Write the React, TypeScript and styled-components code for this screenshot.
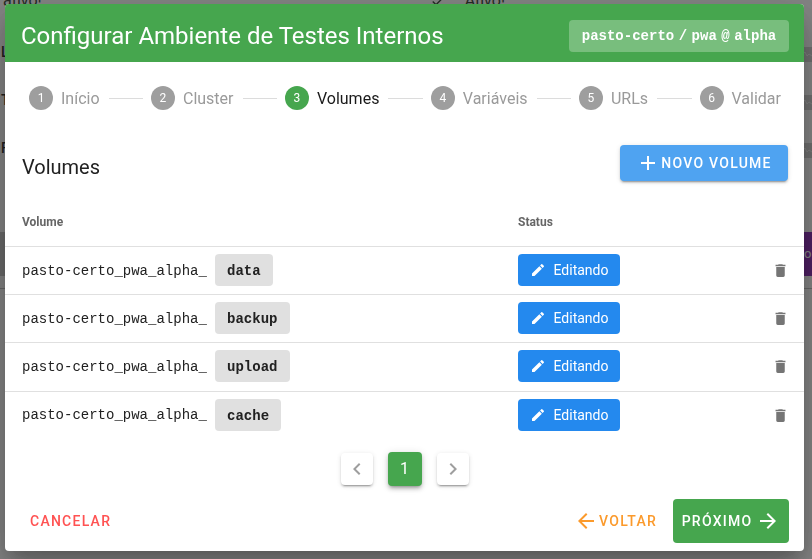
import { Fragment } from "react";
import styled, { createGlobalStyle } from "styled-components";

const GlobalStyle = createGlobalStyle`
  html, body {
    margin: 0;
    padding: 0;
    height: 100%;
    overflow: hidden;
    background: #fff;
    font-family: Roboto, "Liberation Sans", sans-serif;
  }
  * { box-sizing: border-box; }
`;

const mono = `"Liberation Mono", "Courier New", monospace`;
const green = "#46a64e";

// page behind the dialog
const Page = styled.div`
  width: 812px;
  height: 559px;
  overflow: hidden;
  color: #222;
  font-size: 16px;
`;

const TopLine = styled.div`
  height: 10px;
  display: flex;
  justify-content: space-between;
  padding: 0 307px 0 3px;
  line-height: 10px;
  margin-top: -4px;
  margin-bottom: 22px;
  color: #2a3a2a;
`;

const TopStatus = styled.span`
  display: flex;
  align-items: center;
  gap: 19px;
`;

const BackRow = styled.div`
  height: 48px;
  display: flex;
  justify-content: space-between;
  align-items: center;
  padding-left: 1px;
  font-weight: 500;
  font-size: 14px;
`;

const Spark = styled.svg`
  width: 10px;
  height: 15px;
  background: #d0d0d0;
  margin-top: 5px;
  fill: none;
  stroke: #f2f2f2;
  stroke-width: 1;
`;

const PurpleRow = styled.div`
  height: 44px;
  margin-top: 60px;
  display: flex;
  justify-content: space-between;
  background: #c6c6c6;
`;

const PurpleEnd = styled.div`
  width: 8px;
  background: #8721b4;
  color: #fff;
  font-size: 13px;
  line-height: 44px;
`;

const BackDivider = styled.div`
  height: 1px;
  margin-top: 12px;
  background: #c0c0c0;
`;

const Scrim = styled.div`
  position: fixed;
  inset: 0;
  background: rgba(33, 33, 33, 0.55);
`;

const Modal = styled.div`
  position: fixed;
  left: 5px;
  top: 4px;
  width: 799px;
  height: 547px;
  background: #fff;
  border-radius: 4px;
  overflow: hidden;
  box-shadow: 0 11px 15px -7px rgba(0, 0, 0, 0.2), 0 24px 38px 3px rgba(0, 0, 0, 0.14),
    0 9px 46px 8px rgba(0, 0, 0, 0.12);
  display: flex;
  flex-direction: column;
`;

const Header = styled.header`
  height: 58px;
  flex: none;
  background: ${green};
  color: #fff;
  display: flex;
  align-items: center;
  justify-content: space-between;
  padding: 6px 15px 0 16px;
`;

const Title = styled.h1`
  margin: 0;
  font-size: 24px;
  font-weight: 400;
  line-height: 32px;
`;

const Slug = styled.div`
  height: 32px;
  width: 220px;
  display: flex;
  align-items: center;
  justify-content: center;
  border-radius: 4px;
  background: rgba(255, 255, 255, 0.27);
  font-family: ${mono};
  font-weight: 700;
  font-size: 14px;
`;

const SlugSep = styled.span`
  margin: 0 4.5px;
`;

const Stepper = styled.nav`
  height: 72px;
  flex: none;
  display: flex;
  align-items: center;
  padding: 0 23px 0 24px;
`;

const Step = styled.div`
  display: flex;
  align-items: center;
  gap: 8px;
`;

const StepDot = styled.span<{ $active?: boolean }>`
  width: 24px;
  height: 24px;
  border-radius: 50%;
  background: ${(p) => (p.$active ? green : "#9e9e9e")};
  color: #fff;
  font-size: 12px;
  display: flex;
  align-items: center;
  justify-content: center;
`;

const StepLabel = styled.span<{ $active?: boolean }>`
  font-size: 16px;
  color: ${(p) => (p.$active ? "#1a1a1a" : "#9a9a9a")};
`;

const StepLine = styled.span`
  flex: 1;
  height: 1px;
  margin: 0 8px 0 9px;
  background: #dcdcdc;
`;

const SectionHead = styled.div`
  height: 36px;
  margin-top: 11px;
  flex: none;
  display: flex;
  align-items: center;
  justify-content: space-between;
  padding: 0 16px 0 17px;
`;

const SectionTitle = styled.h2`
  margin: 0;
  padding-top: 8px;
  font-size: 20px;
  font-weight: 400;
  color: #212121;
`;

const BaseButton = styled.button`
  border: 0;
  border-radius: 4px;
  font-family: Roboto, sans-serif;
  font-size: 14px;
  font-weight: 500;
  letter-spacing: 1.25px;
  text-transform: uppercase;
  display: flex;
  align-items: center;
  padding: 0;
  cursor: pointer;
`;

const NewButton = styled(BaseButton)`
  width: 168px;
  height: 36px;
  justify-content: center;
  gap: 1px;
  background: #4fa3f1;
  color: #fff;
  box-shadow: 0 3px 1px -2px rgba(0, 0, 0, 0.2), 0 2px 2px 0 rgba(0, 0, 0, 0.14),
    0 1px 5px 0 rgba(0, 0, 0, 0.12);
`;

const Table = styled.div`
  margin-top: 17px;
  flex: none;
`;

const Cols = styled.div`
  display: grid;
  grid-template-columns: 496px 1fr auto;
  align-items: center;
  padding: 0 18px 0 17px;
`;

const HeadRow = styled(Cols)`
  height: 48px;
  font-size: 12px;
  font-weight: 700;
  color: #666;
`;

const Row = styled(Cols)`
  height: 48.2px;
  border-top: 1px solid #e0e0e0;
  padding-bottom: 1.2px;
`;

const VolumeName = styled.div`
  display: flex;
  align-items: center;
  gap: 8px;
  font-family: ${mono};
  font-size: 14px;
  color: #212121;
`;

const Prefix = styled.span`
  padding-top: 1px;
`;

const Suffix = styled.span`
  height: 32px;
  display: flex;
  align-items: center;
  padding: 2px 12.2px 0;
  border-radius: 4px;
  background: #e0e0e0;
  font-weight: 700;
`;

const EditButton = styled(BaseButton)`
  width: 102px;
  height: 32px;
  justify-content: center;
  gap: 8px;
  background: #2489ee;
  color: #fff;
  font-weight: 400;
  letter-spacing: 0;
  text-transform: none;
`;

const Trash = styled.svg`
  width: 17px;
  height: 17px;
  margin: 1px -2.5px 0;
  fill: #757575;
  display: block;
`;

const Pager = styled.div`
  margin-top: 12px;
  height: 36px;
  flex: none;
  display: flex;
  justify-content: center;
  align-items: center;
  gap: 15px;
`;

const PageNav = styled.button`
  width: 32px;
  height: 32px;
  border: 0;
  padding: 0;
  border-radius: 4px;
  background: #fff;
  display: flex;
  align-items: center;
  justify-content: center;
  color: #9e9e9e;
  box-shadow: 0 3px 1px -2px rgba(0, 0, 0, 0.2), 0 2px 2px 0 rgba(0, 0, 0, 0.14),
    0 1px 5px 0 rgba(0, 0, 0, 0.12);
`;

const PageNumber = styled.button`
  width: 34px;
  height: 34px;
  border: 0;
  padding: 0;
  border-radius: 4px;
  background: ${green};
  color: #fff;
  font-family: Roboto, sans-serif;
  font-size: 16px;
  box-shadow: 0 3px 3px -2px rgba(0, 0, 0, 0.25), 0 3px 4px 0 rgba(0, 0, 0, 0.18),
    0 1px 8px 0 rgba(0, 0, 0, 0.12);
`;

const Footer = styled.footer`
  margin-top: 12px;
  height: 44px;
  flex: none;
  display: flex;
  align-items: center;
  justify-content: space-between;
  padding: 0 15px 0 25px;
`;

const FooterRight = styled.div`
  display: flex;
  align-items: center;
  gap: 16px;
`;

const TextButton = styled(BaseButton)<{ $color: string }>`
  background: transparent;
  color: ${(p) => p.$color};
  gap: 1px;
`;

const NextButton = styled(BaseButton)`
  width: 116px;
  height: 44px;
  justify-content: center;
  gap: 4px;
  background: ${green};
  color: #fff;
`;

const Icon = ({ d, size }: { d: string; size: number }) => (
  <svg width={size} height={size} viewBox="0 0 24 24" fill="currentColor">
    <path d={d} />
  </svg>
);

const Wave = () => (
  <Spark viewBox="0 0 10 15">
    <path d="M0 8 L3 5 L5 9 L7 7 L10 9" />
  </Spark>
);

const PLUS = "M19 13h-6v6h-2v-6H5v-2h6V5h2v6h6v2z";
const PENCIL =
  "M3 17.25V21h3.75L17.81 9.94l-3.75-3.75L3 17.25zM20.71 7.04a1 1 0 0 0 0-1.41l-2.34-2.34a1 1 0 0 0-1.41 0l-1.83 1.83 3.75 3.75 1.83-1.83z";
const DELETE = "M19 4h-3.5l-1-1h-5l-1 1H5v2h14V4zM6 19a2 2 0 0 0 2 2h8a2 2 0 0 0 2-2V7H6v12z";
const LEFT = "M15.41 7.41 14 6l-6 6 6 6 1.41-1.41L10.83 12z";
const RIGHT = "M8.59 16.59 10 18l6-6-6-6-1.41 1.41L13.17 12z";
const ARROW_LEFT = "M20 11H7.83l5.59-5.59L12 4l-8 8 8 8 1.41-1.41L7.83 13H20v-2z";
const ARROW_RIGHT = "M12 4l-1.41 1.41L16.17 11H4v2h12.17l-5.58 5.59L12 20l8-8z";
const CHECK = "M9 16.17 4.83 12l-1.42 1.41L9 19 21 7l-1.41-1.41z";

const steps = ["Início", "Cluster", "Volumes", "Variáveis", "URLs", "Validar"];
const volumes = ["data", "backup", "upload", "cache"];

export default function App() {
  return (
    <>
      <GlobalStyle />
      <Page>
        <TopLine>
          <span>ativo!</span>
          <TopStatus>
            <Icon d={CHECK} size={16} />
            Ativo!
          </TopStatus>
        </TopLine>
        <BackRow>
          L<Wave />
        </BackRow>
        <BackRow>
          T<Wave />
        </BackRow>
        <BackRow>
          F<Wave />
        </BackRow>
        <PurpleRow>
          <span />
          <PurpleEnd>o</PurpleEnd>
        </PurpleRow>
        <BackDivider />
      </Page>
      <Scrim />
      <Modal>
        <Header>
          <Title>Configurar Ambiente de Testes Internos</Title>
          <Slug>
            pasto-certo<SlugSep>/</SlugSep>pwa<SlugSep>@</SlugSep>alpha
          </Slug>
        </Header>
        <Stepper>
          {steps.map((label, i) => (
            <Fragment key={label}>
              {i > 0 && <StepLine />}
              <Step>
                <StepDot $active={i === 2}>{i + 1}</StepDot>
                <StepLabel $active={i === 2}>{label}</StepLabel>
              </Step>
            </Fragment>
          ))}
        </Stepper>
        <SectionHead>
          <SectionTitle>Volumes</SectionTitle>
          <NewButton>
            <Icon d={PLUS} size={24} />
            Novo Volume
          </NewButton>
        </SectionHead>
        <Table>
          <HeadRow>
            <span>Volume</span>
            <span>Status</span>
            <span />
          </HeadRow>
          {volumes.map((v) => (
            <Row key={v}>
              <VolumeName>
                <Prefix>pasto-certo_pwa_alpha_</Prefix>
                <Suffix>{v}</Suffix>
              </VolumeName>
              <div>
                <EditButton>
                  <Icon d={PENCIL} size={16} />
                  Editando
                </EditButton>
              </div>
              <Trash viewBox="0 0 24 24">
                <path d={DELETE} />
              </Trash>
            </Row>
          ))}
        </Table>
        <Pager>
          <PageNav>
            <Icon d={LEFT} size={24} />
          </PageNav>
          <PageNumber>1</PageNumber>
          <PageNav>
            <Icon d={RIGHT} size={24} />
          </PageNav>
        </Pager>
        <Footer>
          <TextButton $color="#ff5252">Cancelar</TextButton>
          <FooterRight>
            <TextButton $color="#fb9a2c">
              <Icon d={ARROW_LEFT} size={24} />
              Voltar
            </TextButton>
            <NextButton>
              Próximo
              <Icon d={ARROW_RIGHT} size={24} />
            </NextButton>
          </FooterRight>
        </Footer>
      </Modal>
    </>
  );
}
